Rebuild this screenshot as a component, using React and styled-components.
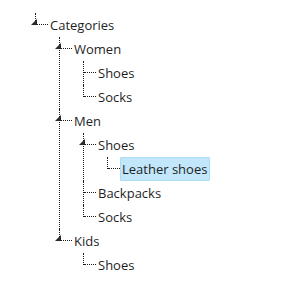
import React from "react";
import styled, { createGlobalStyle, css } from "styled-components";

const GlobalStyle = createGlobalStyle`
  html, body {
    margin: 0;
    padding: 0;
    background: #ffffff;
  }
  body {
    font-family: "Open Sans", "Noto Sans", "DejaVu Sans", sans-serif;
    font-size: 13px;
    color: #1f1f1f;
  }
`;

const tree = {
  text: "Categories",
  items: [
    { text: "Women", items: [{ text: "Shoes" }, { text: "Socks" }] },
    {
      text: "Men",
      items: [
        { text: "Shoes", items: [{ text: "Leather shoes", selected: true }] },
        { text: "Backpacks" },
        { text: "Socks" },
      ],
    },
    { text: "Kids", items: [{ text: "Shoes" }] },
  ],
};

const Frame = styled.div`
  padding: 13px 0 0 35px;
`;

const List = styled.ul`
  list-style: none;
  margin: 0;
  padding: 0;
  ${(p) =>
    p.$nested &&
    css`
      margin-left: 24px;
    `}
`;

const Node = styled.li`
  position: relative;

  /* horizontal connector */
  &::before {
    content: "";
    position: absolute;
    left: 1px;
    top: 11px;
    width: 12px;
    border-top: 1px dotted #1a1a1a;
  }

  /* vertical guide */
  &::after {
    content: "";
    position: absolute;
    left: 0;
    top: 0;
    bottom: 0;
    border-left: 1px dotted #1a1a1a;
  }

  &:last-child::after {
    bottom: auto;
    height: 12px;
  }
`;

const Row = styled.div`
  display: flex;
  align-items: center;
  height: 24px;
`;

const Label = styled.span`
  margin-left: 13px;
  padding: 0 2px 0 1px;
  height: 22px;
  line-height: 22px;
  border: 1px solid transparent;
  border-radius: 1px;
  white-space: nowrap;
  ${(p) =>
    p.$selected &&
    css`
      background: #c2e7fb;
      border-color: #aedcf5;
    `}
`;

const Toggle = styled.svg`
  position: absolute;
  left: -4px;
  top: 6px;
  z-index: 1;
`;

function TreeNode({ node }) {
  return (
    <Node>
      {node.items && (
        <Toggle width="6" height="6" viewBox="0 0 6 6">
          <polygon points="6,0 6,6 0,6" fill="#2a2a2a" />
        </Toggle>
      )}
      <Row>
        <Label $selected={node.selected}>{node.text}</Label>
      </Row>
      {node.items && (
        <List $nested>
          {node.items.map((child, i) => (
            <TreeNode key={i} node={child} />
          ))}
        </List>
      )}
    </Node>
  );
}

export default function App() {
  return (
    <>
      <GlobalStyle />
      <Frame>
        <List>
          <TreeNode node={tree} />
        </List>
      </Frame>
    </>
  );
}
